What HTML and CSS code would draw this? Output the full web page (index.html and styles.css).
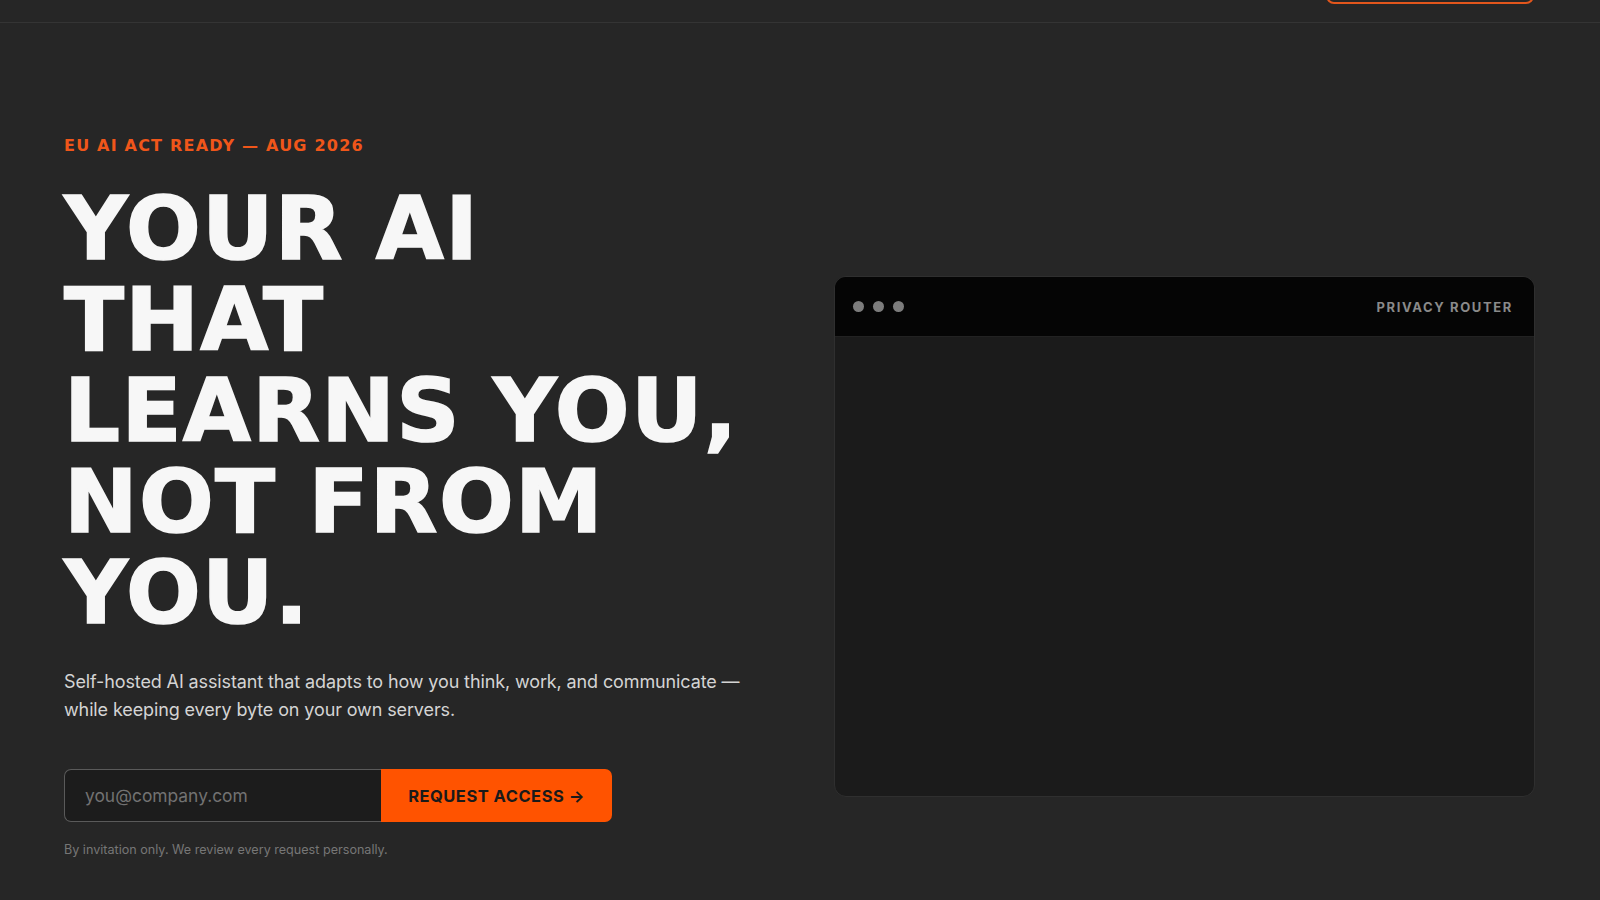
FILE: index.html
```html
<!DOCTYPE html>
<html lang="en">
<head>
<meta charset="utf-8">
<title>Your AI that learns you</title>
<link rel="stylesheet" href="styles.css">
</head>
<body>
<header class="topbar">
  <a class="nav-cta" href="#">Request access</a>
</header>
<main class="hero">
  <div class="hero-copy">
    <p class="eyebrow">EU AI Act ready — Aug 2026</p>
    <h1 class="headline">Your AI<br>that<br>learns you,<br>not from<br>you.</h1>
    <p class="lede">Self-hosted AI assistant that adapts to how you think, work, and communicate — while keeping every byte on your own servers.</p>
    <form class="signup">
      <input class="signup-input" type="email" placeholder="you@company.com">
      <button class="signup-btn" type="button">Request access →</button>
    </form>
    <p class="footnote">By invitation only. We review every request personally.</p>
  </div>
  <div class="window">
    <div class="window-bar">
      <div class="dots"><span class="dot"></span><span class="dot"></span><span class="dot"></span></div>
      <span class="window-title">Privacy Router</span>
    </div>
    <div class="window-body"></div>
  </div>
</main>
</body>
</html>
```
FILE: styles.css
```css
* { box-sizing: border-box; }
html, body { margin: 0; padding: 0; }
body {
  background: #262626;
  color: #f5f5f5;
  font-family: Inter, "Liberation Sans", sans-serif;
  height: 900px;
  overflow: hidden;
}
.topbar {
  height: 23px;
  border-bottom: 1px solid #343434;
  display: flex;
  justify-content: flex-end;
  align-items: flex-end;
  padding: 0 66px 18px 0;
  overflow: hidden;
}
.nav-cta {
  display: block;
  flex: none;
  width: 208px;
  height: 44px;
  border: 2px solid #e2561c;
  border-radius: 8px;
  color: #e2561c;
  text-decoration: none;
  font-size: 14px;
  font-weight: 700;
  text-transform: uppercase;
}
.hero {
  display: grid;
  grid-template-columns: 1fr 1fr;
  column-gap: 68px;
  align-items: start;
  padding: 113px 65px 0 64px;
}
.eyebrow {
  margin: 0 0 28px;
  color: #f0561a;
  font-family: "DejaVu Sans", sans-serif;
  font-size: 16px;
  line-height: 19px;
  font-weight: 700;
  letter-spacing: 0.075em;
  text-transform: uppercase;
}
.headline {
  margin: 0 0 30px;
  font-family: "DejaVu Sans", sans-serif;
  font-size: 88px;
  line-height: 91px;
  font-weight: 700;
  letter-spacing: 0.015em;
  -webkit-text-stroke: 1.6px #f7f7f7;
  text-transform: uppercase;
  color: #f7f7f7;
}
.lede {
  margin: 0 0 45px;
  font-size: 18px;
  line-height: 28px;
  letter-spacing: -0.12px;
  color: #d4d4d4;
  max-width: 690px;
}
.signup {
  display: flex;
  height: 53px;
  margin: 0 0 19px;
}
.signup-input {
  width: 317px;
  flex: none;
  background: #1c1c1c;
  border: 1px solid #5a5a5a;
  border-right: none;
  border-radius: 7px 0 0 7px;
  padding: 0 20px;
  font-family: Inter, "Liberation Sans", sans-serif;
  font-size: 17.4px;
  color: #ddd;
  outline: none;
}
.signup-input::placeholder { color: #727272; }
.signup-btn {
  width: 231px;
  flex: none;
  padding: 0;
  background: #ff5300;
  border: none;
  border-radius: 0 7px 7px 0;
  color: #1a1a1a;
  font-family: Inter, "Liberation Sans", sans-serif;
  font-size: 16.5px;
  font-weight: 700;
  letter-spacing: 0.03em;
  text-transform: uppercase;
  cursor: pointer;
}
.footnote {
  margin: 0;
  font-size: 12.6px;
  line-height: 18px;
  color: #767676;
}
.window {
  margin-top: 140px;
  height: 521px;
  border: 1px solid #2f2f2f;
  border-radius: 12px;
  background: #1b1b1b;
  overflow: hidden;
  display: flex;
  flex-direction: column;
}
.window-bar {
  flex: 0 0 60px;
  background: #050505;
  border-bottom: 1px solid #222;
  display: flex;
  align-items: center;
  justify-content: space-between;
  padding: 0 21px 0 18px;
}
.dots { display: flex; gap: 9px; }
.dot {
  width: 11px;
  height: 11px;
  border-radius: 50%;
  background: #7c7c7c;
}
.window-title {
  font-size: 13px;
  font-weight: 700;
  letter-spacing: 0.125em;
  text-transform: uppercase;
  color: #8a8a8a;
}
.window-body { flex: 1; }
```
